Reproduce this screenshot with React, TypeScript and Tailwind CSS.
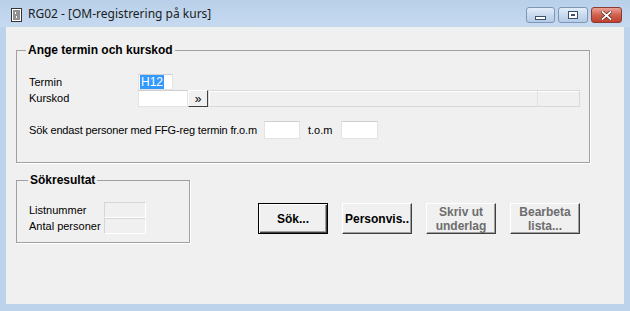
import React from 'react';

// Sunken white text box
const TextBox: React.FC<{ className?: string; children?: React.ReactNode }> = ({ className = '', children }) => (
  <div className={`flex items-center border border-[#e3e3e3] border-t-[#cfcfcf] bg-white ${className}`}>{children}</div>
);

// Read-only grey field
const ReadField: React.FC<{ className?: string }> = ({ className = '' }) => (
  <div className={`border border-[#d6d6d6] border-b-white border-r-white bg-[#f0f0f0] ${className}`} />
);

const DialogButton: React.FC<{ label: React.ReactNode; isDefault?: boolean; disabled?: boolean }> = ({
  label,
  isDefault,
  disabled,
}) => (
  <button
    className={`flex h-[31px] w-[70px] items-center justify-center bg-[#f0f0f0] text-center text-[12px] font-bold leading-[14px] ${
      isDefault
        ? 'border border-black shadow-[inset_1px_1px_0_#fff,inset_-1px_-1px_0_#404040,inset_-2px_-2px_0_#a0a0a0]'
        : 'border border-t-white border-l-white border-r-[#404040] border-b-[#404040] shadow-[inset_-1px_-1px_0_#a0a0a0]'
    } ${disabled ? 'text-[#6d6d6d]' : 'text-black'}`}
  >
    {label}
  </button>
);

const CaptionButton: React.FC<{ kind: 'min' | 'max' | 'close' }> = ({ kind }) => {
  if (kind === 'close') {
    return (
      <div className="flex h-[16px] w-[31px] items-center justify-center rounded-[3px] border border-[#8a3a30] bg-gradient-to-b from-[#e8a195] via-[#d0604f] to-[#c0402d]">
        <svg width="11" height="9" viewBox="0 0 11 9">
          <path d="M1.5 1 L9.5 8 M9.5 1 L1.5 8" stroke="#5a2018" strokeWidth="3.2" strokeLinecap="square" />
          <path d="M1.5 1 L9.5 8 M9.5 1 L1.5 8" stroke="#ffffff" strokeWidth="1.8" strokeLinecap="square" />
        </svg>
      </div>
    );
  }
  return (
    <div
      className={`flex h-[16px] items-center justify-center rounded-[3px] border border-[#7f97b7] bg-gradient-to-b from-[#e3edf8] via-[#c9daee] to-[#b5cbe6] ${
        kind === 'min' ? 'w-[29px]' : 'w-[30px]'
      }`}
    >
      {kind === 'min' ? (
        <div className="mt-[5px] h-[4px] w-[11px] border border-[#39506f] bg-white" />
      ) : (
        <div className="flex h-[8px] w-[10px] items-center justify-center border border-[#39506f] bg-white">
          <div className="h-[2px] w-[4px] border border-[#39506f]" />
        </div>
      )}
    </div>
  );
};

const App: React.FC = () => {
  return (
    <div className="flex h-[311px] w-[630px] flex-col bg-[#bdd3ec] font-['Liberation_Sans',Arial,sans-serif] text-[11px] text-black">
      {/* Title bar */}
      <div className="flex h-[27px] shrink-0 items-start bg-gradient-to-b from-[#b9d0ea] to-[#c6daf0]">
        <svg className="ml-[11px] mt-[8px]" width="11" height="14" viewBox="0 0 11 14">
          <rect x="0.5" y="0.5" width="10" height="13" fill="#fff" stroke="#333" />
          <path d="M2 3h7M2 5h2M5 5h4M2 7h7M2 9h3M6 9h3M2 11h7" stroke="#222" strokeWidth="1" />
        </svg>
        <span className="ml-[6px] mt-[6px] font-['Noto_Sans',sans-serif] text-[12px] leading-[16px] text-[#1c1c1c]">
          RG02 - [OM-registrering på kurs]
        </span>
        <div className="ml-auto mr-[8px] mt-[7px] flex gap-[3px]">
          <CaptionButton kind="min" />
          <CaptionButton kind="max" />
          <CaptionButton kind="close" />
        </div>
      </div>

      {/* Client area */}
      <div className="mx-[6px] mb-[7px] flex-1 bg-[#f0f0f0]">
        <fieldset className="ml-[10px] mt-[15px] h-[121px] w-[574px] border border-[#a0a0a0] shadow-[1px_1px_0_#fff]">
          <legend className="ml-[9px] px-[2px] text-[12px] font-bold leading-[16px]">Ange termin och kurskod</legend>
          <div className="pl-[12px]">
            <div className="mt-[16px] flex h-[16px] items-center">
              <span className="w-[109px]">Termin</span>
              <TextBox className="h-[16px] w-[35px]">
                <span className="ml-[1px] bg-[#3399ff] px-[1px] text-[12px] leading-[14px] text-white">H12</span>
              </TextBox>
            </div>
            <div className="flex h-[17px] items-center">
              <span className="w-[109px]">Kurskod</span>
              <TextBox className="h-[17px] w-[50px]" />
              <button className="flex h-[17px] w-[20px] items-center justify-center border border-t-white border-l-white border-r-[#404040] border-b-[#404040] bg-[#f0f0f0] text-[12px] leading-none">
                »
              </button>
              <div className="flex h-[17px] w-[372px] border border-[#d9d9d9] bg-[#f0f0f0] shadow-[inset_1px_1px_0_#fff]">
                <div className="flex-1" />
                <div className="w-[42px] border-l border-[#e2e2e2]" />
              </div>
            </div>
            <div className="mt-[14px] flex h-[18px] items-center">
              <span className="w-[235px] tracking-[-0.15px]">Sök endast personer med FFG-reg termin fr.o.m</span>
              <TextBox className="h-[18px] w-[36px]" />
              <span className="ml-[8px] w-[33px]">t.o.m</span>
              <TextBox className="h-[18px] w-[37px]" />
            </div>
          </div>
        </fieldset>

        <div className="ml-[10px] mt-[9px] flex items-start">
          <fieldset className="h-[71px] w-[174px] border border-[#a0a0a0] shadow-[1px_1px_0_#fff]">
            <legend className="ml-[11px] px-[2px] text-[12px] font-bold leading-[16px]">Sökresultat</legend>
            <div className="mt-[14px] pl-[12px]">
              <div className="flex h-[16px] items-center">
                <span className="w-[75px]">Listnummer</span>
                <ReadField className="h-[16px] w-[42px]" />
              </div>
              <div className="flex h-[16px] items-center">
                <span className="w-[75px]">Antal personer</span>
                <ReadField className="h-[16px] w-[42px]" />
              </div>
            </div>
          </fieldset>

          <div className="ml-[68px] mt-[31px] flex gap-[14px]">
            <DialogButton label="Sök..." isDefault />
            <DialogButton label="Personvis.." />
            <DialogButton
              label={
                <>
                  Skriv ut
                  <br />
                  underlag
                </>
              }
              disabled
            />
            <DialogButton
              label={
                <>
                  Bearbeta
                  <br />
                  lista...
                </>
              }
              disabled
            />
          </div>
        </div>
      </div>
    </div>
  );
};

export default App;
